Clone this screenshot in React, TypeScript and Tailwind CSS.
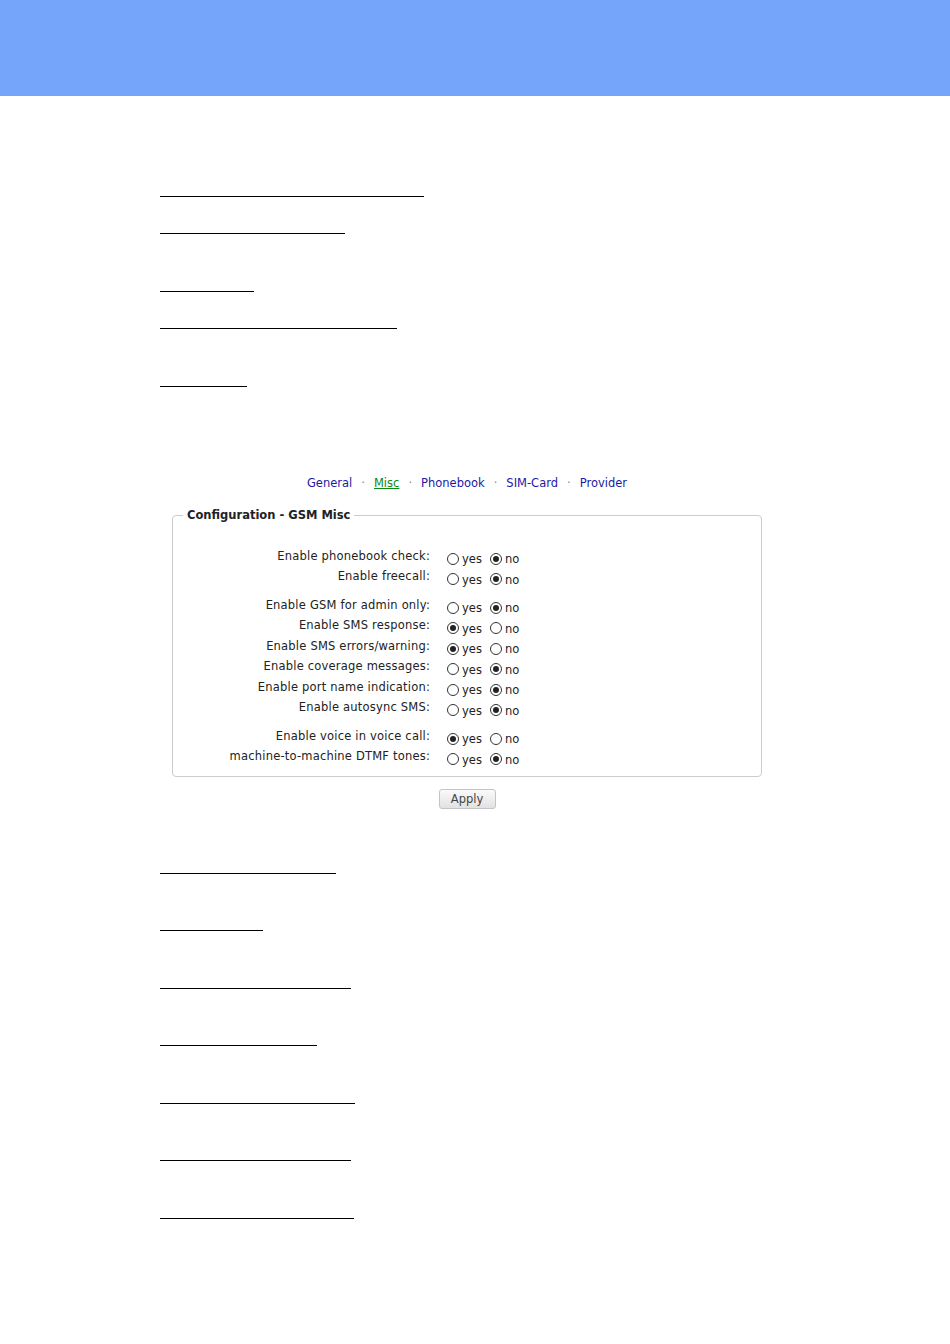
import React from 'react'

const font = { fontFamily: '"DejaVu Sans", Verdana, sans-serif' }

const topLines = [
  { mt: 'mt-[100px]', w: 'w-[264px]' },
  { mt: 'mt-[36px]', w: 'w-[185px]' },
  { mt: 'mt-[57px]', w: 'w-[94px]' },
  { mt: 'mt-[36px]', w: 'w-[237px]' },
  { mt: 'mt-[57px]', w: 'w-[87px]' },
]

const bottomLines = [
  { mt: 'mt-[64px]', w: 'w-[176px]' },
  { mt: 'mt-[56px]', w: 'w-[103px]' },
  { mt: 'mt-[57px]', w: 'w-[191px]' },
  { mt: 'mt-[56px]', w: 'w-[157px]' },
  { mt: 'mt-[57px]', w: 'w-[195px]' },
  { mt: 'mt-[56px]', w: 'w-[191px]' },
  { mt: 'mt-[57px]', w: 'w-[194px]' },
]

const groups: { label: string; yes: boolean }[][] = [
  [
    { label: 'Enable phonebook check:', yes: false },
    { label: 'Enable freecall:', yes: false },
  ],
  [
    { label: 'Enable GSM for admin only:', yes: false },
    { label: 'Enable SMS response:', yes: true },
    { label: 'Enable SMS errors/warning:', yes: true },
    { label: 'Enable coverage messages:', yes: false },
    { label: 'Enable port name indication:', yes: false },
    { label: 'Enable autosync SMS:', yes: false },
  ],
  [
    { label: 'Enable voice in voice call:', yes: true },
    { label: 'machine-to-machine DTMF tones:', yes: false },
  ],
]

const tabs = ['General', 'Misc', 'Phonebook', 'SIM-Card', 'Provider']

function Radio({ checked, className = '' }: { checked: boolean; className?: string }) {
  return (
    <span
      className={`flex shrink-0 w-[12px] h-[12px] rounded-full border border-[#333] bg-white items-center justify-center ${className}`}
    >
      {checked && <span className="w-[6px] h-[6px] rounded-full bg-[#222]" />}
    </span>
  )
}

function Row({ label, yes }: { label: string; yes: boolean }) {
  return (
    <div className="flex items-center h-[20.5px]">
      <div className="w-[257px] text-right text-[11.5px] text-[#222] tracking-[0.2px]">{label}</div>
      <div className="flex items-center pl-[17px] text-[11.5px] text-[#222] translate-y-[2px]">
        <Radio checked={yes} />
        <span className="ml-[3px] mt-[3px]">yes</span>
        <Radio checked={!yes} className="ml-[8px]" />
        <span className="ml-[3px] mt-[3px]">no</span>
      </div>
    </div>
  )
}

function Line({ mt, w }: { mt: string; w: string }) {
  return <div className={`${mt} ${w} h-px bg-black`} />
}

export default function App() {
  return (
    <div className="w-[950px] min-h-[1344px] bg-white" style={font}>
      <div className="h-[96px] bg-[#75a5fa]" />

      {/* ── Top links ── */}
      <div className="pl-[160px] flex flex-col">
        {topLines.map((l, i) => (
          <Line key={i} mt={l.mt} w={l.w} />
        ))}
      </div>

      {/* ── Tabs ── */}
      <div className="mt-[90px] ml-[172px] w-[590px] flex justify-center items-center text-[11.5px] h-[14px]">
        {tabs.map((t, i) => (
          <React.Fragment key={t}>
            {i > 0 && <span className="mx-[9px] text-[#888]">·</span>}
            <span className={t === 'Misc' ? 'text-[#118811] underline' : 'text-[#1a1aa6]'}>{t}</span>
          </React.Fragment>
        ))}
      </div>

      {/* ── Config box ── */}
      <div className="mt-[16px] ml-[172px] w-[590px]">
        <fieldset className="border border-[#ccc] rounded-[4px] px-0 pt-[22px] pb-[9px]">
          <legend className="ml-[10px] px-[4px] text-[11.5px] font-bold text-[#222]">
            Configuration - GSM Misc
          </legend>
          <div className="flex flex-col gap-[8px]">
            {groups.map((g, i) => (
              <div key={i} className="flex flex-col">
                {g.map((r) => (
                  <Row key={r.label} label={r.label} yes={r.yes} />
                ))}
              </div>
            ))}
          </div>
        </fieldset>
        <div className="flex justify-center mt-[12px]">
          <button className="w-[57px] h-[20px] rounded-[3px] border border-[#c4c4c4] bg-gradient-to-b from-[#fafafa] to-[#e2e2e2] text-[11.5px] text-[#444]">
            Apply
          </button>
        </div>
      </div>

      {/* ── Bottom links ── */}
      <div className="pl-[160px] flex flex-col">
        {bottomLines.map((l, i) => (
          <Line key={i} mt={l.mt} w={l.w} />
        ))}
      </div>
    </div>
  )
}
